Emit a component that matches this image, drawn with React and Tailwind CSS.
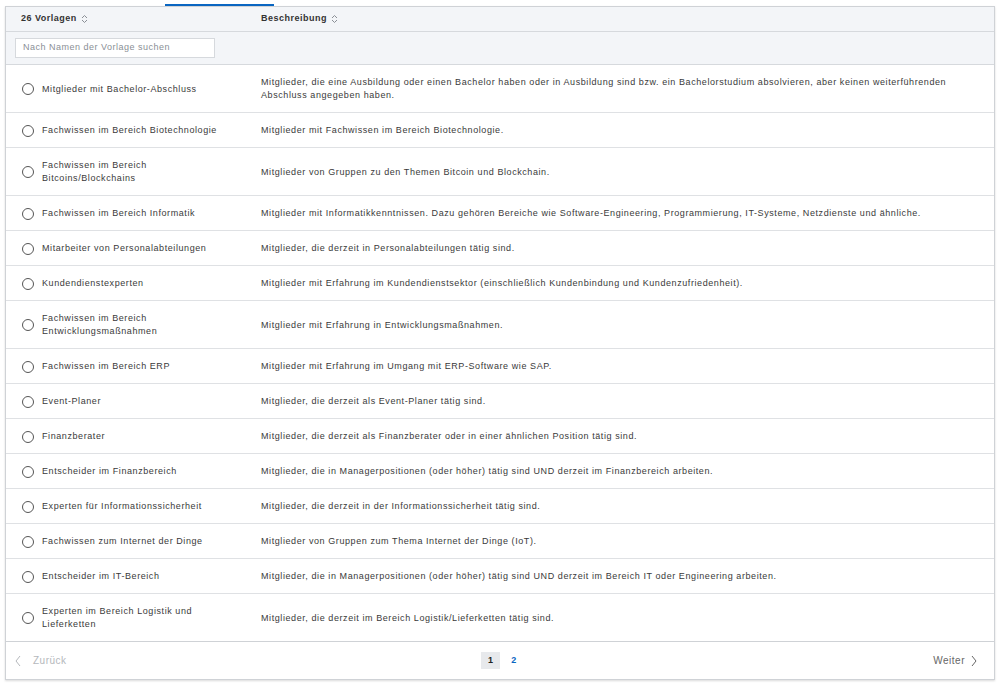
import React from "react";

const rows = [
  { t: ["Mitglieder mit Bachelor-Abschluss"], d: ["Mitglieder, die eine Ausbildung oder einen Bachelor haben oder in Ausbildung sind bzw. ein Bachelorstudium absolvieren, aber keinen weiterführenden", "Abschluss angegeben haben."] },
  { t: ["Fachwissen im Bereich Biotechnologie"], d: ["Mitglieder mit Fachwissen im Bereich Biotechnologie."] },
  { t: ["Fachwissen im Bereich", "Bitcoins/Blockchains"], d: ["Mitglieder von Gruppen zu den Themen Bitcoin und Blockchain."] },
  { t: ["Fachwissen im Bereich Informatik"], d: ["Mitglieder mit Informatikkenntnissen. Dazu gehören Bereiche wie Software-Engineering, Programmierung, IT-Systeme, Netzdienste und ähnliche."] },
  { t: ["Mitarbeiter von Personalabteilungen"], d: ["Mitglieder, die derzeit in Personalabteilungen tätig sind."] },
  { t: ["Kundendienstexperten"], d: ["Mitglieder mit Erfahrung im Kundendienstsektor (einschließlich Kundenbindung und Kundenzufriedenheit)."] },
  { t: ["Fachwissen im Bereich", "Entwicklungsmaßnahmen"], d: ["Mitglieder mit Erfahrung in Entwicklungsmaßnahmen."] },
  { t: ["Fachwissen im Bereich ERP"], d: ["Mitglieder mit Erfahrung im Umgang mit ERP-Software wie SAP."] },
  { t: ["Event-Planer"], d: ["Mitglieder, die derzeit als Event-Planer tätig sind."] },
  { t: ["Finanzberater"], d: ["Mitglieder, die derzeit als Finanzberater oder in einer ähnlichen Position tätig sind."] },
  { t: ["Entscheider im Finanzbereich"], d: ["Mitglieder, die in Managerpositionen (oder höher) tätig sind UND derzeit im Finanzbereich arbeiten."] },
  { t: ["Experten für Informationssicherheit"], d: ["Mitglieder, die derzeit in der Informationssicherheit tätig sind."] },
  { t: ["Fachwissen zum Internet der Dinge"], d: ["Mitglieder von Gruppen zum Thema Internet der Dinge (IoT)."] },
  { t: ["Entscheider im IT-Bereich"], d: ["Mitglieder, die in Managerpositionen (oder höher) tätig sind UND derzeit im Bereich IT oder Engineering arbeiten."] },
  { t: ["Experten im Bereich Logistik und", "Lieferketten"], d: ["Mitglieder, die derzeit im Bereich Logistik/Lieferketten tätig sind."] },
];

function SortIcon() {
  return (
    <svg width="7" height="10" viewBox="0 0 7 10" className="ml-[4px]" fill="none" stroke="#8a8f96" strokeWidth="1">
      <path d="M1 4 L3.5 1.5 L6 4" />
      <path d="M1 6 L3.5 8.5 L6 6" />
    </svg>
  );
}

function Lines({ lines }) {
  return lines.map((l, i) => (
    <React.Fragment key={i}>
      {i > 0 && <br />}
      {l}
    </React.Fragment>
  ));
}

export default function App() {
  return (
    <div className="w-[1000px] h-[687px] bg-white text-[#3a3a3a]" style={{ fontFamily: '"Liberation Sans", Arial, sans-serif' }}>
      <div className="pt-[4px] pl-[165px]">
        <div className="w-[109px] h-[2px] bg-[#0a66c2]" />
      </div>
      <div className="ml-[5px] w-[990px] border border-[#cfd2d6] shadow-[0_1px_2px_rgba(0,0,0,0.15)]">
        {/* header */}
        <div className="flex h-[25px] items-center bg-[#f3f5f8] border-b border-[#d6d9dd] text-[9px] font-bold tracking-[0.5px] text-[#333]">
          <div className="w-[255px] pl-[15px] flex items-center">26 Vorlagen<SortIcon /></div>
          <div className="flex items-center">Beschreibung<SortIcon /></div>
        </div>
        {/* search */}
        <div className="h-[33px] flex items-center bg-[#f3f5f8] border-b border-[#d6d9dd] pl-[9px]">
          <div className="w-[200px] h-[20px] bg-white border border-[#d6d9dd] flex items-center pl-[7px] text-[9px] tracking-[0.5px] text-[#8a8f96]">
            Nach Namen der Vorlage suchen
          </div>
        </div>
        {rows.map((r, i) => (
          <div key={i} className={"flex items-center text-[9px] leading-[13px] tracking-[0.58px] pt-[11px] pb-[10px] " + (i < rows.length - 1 ? "border-b border-[#dfe1e4]" : "")}>
            <div className="w-[255px] pl-[16px] flex items-center">
              <div className="w-[12px] h-[12px] rounded-full border border-[#555] shrink-0" />
              <div className="ml-[8px] text-[#3a3a3a]"><Lines lines={r.t} /></div>
            </div>
            <div className="text-[#3a3a3a]"><Lines lines={r.d} /></div>
          </div>
        ))}
        {/* footer */}
        <div className="h-[38px] border-t border-[#cfd2d6] flex items-center px-[9px] text-[10px] tracking-[0.5px]">
          <div className="flex items-center w-[200px] text-[#b5b8bc]">
            <svg width="6" height="12" viewBox="0 0 6 12" fill="none" stroke="#b5b8bc" strokeWidth="1"><path d="M5 1 L1 6 L5 11" /></svg>
            <span className="ml-[12px]">Zurück</span>
          </div>
          <div className="flex-1 flex justify-center items-center pr-[2px]">
            <div className="w-[19px] h-[17px] bg-[#e7e9ec] flex items-center justify-center text-[#222] font-bold text-[9px]">1</div>
            <div className="ml-[11px] text-[#0a66c2] font-bold text-[9px]">2</div>
          </div>
          <div className="flex items-center justify-end w-[200px] pr-[8px] text-[#666]">
            <span>Weiter</span>
            <svg width="6" height="12" viewBox="0 0 6 12" fill="none" stroke="#666" strokeWidth="1" className="ml-[6px]"><path d="M1 1 L5 6 L1 11" /></svg>
          </div>
        </div>
      </div>
    </div>
  );
}
